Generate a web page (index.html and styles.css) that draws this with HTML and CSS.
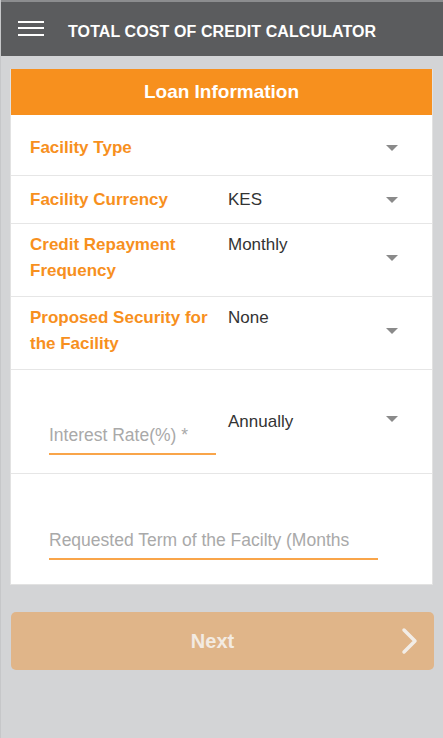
FILE: index.html
```html
<!DOCTYPE html>
<html lang="en">
<head>
    <meta charset="UTF-8">
    <meta name="viewport" content="width=device-width, initial-scale=1.0">
    <title>Total Cost of Credit Calculator</title>
    <link rel="stylesheet" href="styles.css">
</head>
<body>
    <header class="topbar">
        <div class="menu">
            <span></span><span></span><span></span>
        </div>
        <h1>TOTAL COST OF CREDIT CALCULATOR</h1>
    </header>

    <main class="page">
        <section class="card">
            <h2 class="card-title">Loan Information</h2>

            <div class="row row-first">
                <div class="label">Facility Type</div>
                <div class="value"></div>
                <div class="caret"></div>
            </div>
            <div class="row row-short">
                <div class="label">Facility Currency</div>
                <div class="value">KES</div>
                <div class="caret"></div>
            </div>
            <div class="row row-tall">
                <div class="label">Credit Repayment Frequency</div>
                <div class="value value-top">Monthly</div>
                <div class="caret"></div>
            </div>
            <div class="row row-tall">
                <div class="label">Proposed Security for the Facility</div>
                <div class="value value-top">None</div>
                <div class="caret"></div>
            </div>
            <div class="row row-rate">
                <input type="text" class="field field-rate" placeholder="Interest Rate(%) *">
                <div class="value">Annually</div>
                <div class="caret caret-rate"></div>
            </div>
            <div class="row row-term">
                <input type="text" class="field field-term" placeholder="Requested Term of the Facilty (Months">
            </div>
        </section>

        <button type="button" class="next">
            Next
            <svg class="chevron" width="18" height="28" viewBox="0 0 18 28">
                <path d="M3 3 L14 14 L3 25" fill="none" stroke="#f2ede7" stroke-width="3.5" stroke-linecap="round" stroke-linejoin="round"/>
            </svg>
        </button>
    </main>
</body>
</html>
```

FILE: styles.css
```css
body {
    margin: 0;
    font-family: "Liberation Sans", Arial, sans-serif;
    background: #d3d4d6;
    height: 738px;
    border-left: 1px solid #c6c7c9;
    box-sizing: border-box;
}
.topbar {
    height: 56px;
    background: #5b5c5e;
    border-top: 2px solid #8c8d8f;
    box-sizing: border-box;
    display: flex;
    align-items: center;
    padding-left: 17px;
}
.menu {
    width: 26px;
    display: flex;
    flex-direction: column;
    gap: 4.5px;
    margin-top: -2px;
}
.menu span {
    display: block;
    height: 2px;
    background: #fff;
}
.topbar h1 {
    margin: 6px 0 0 24px;
    font-size: 16px;
    font-weight: bold;
    color: #fff;
    letter-spacing: 0.1px;
}
.page {
    padding: 13px 10px 0 9px;
}
.card {
    background: #fff;
    border: 1px solid #e2e2e2;
    border-top: none;
}
.card-title {
    margin: 0;
    height: 46px;
    line-height: 46px;
    background: #f7901e;
    color: #fff;
    font-size: 19px;
    font-weight: bold;
    text-align: center;
}
.row {
    display: grid;
    grid-template-columns: 198px 1fr 24px;
    align-items: center;
    padding: 0 28px 0 19px;
    border-bottom: 1px solid #e6e6e6;
    box-sizing: border-box;
}
.row-first {
    height: 61px;
    padding-top: 5px;
}
.row-short {
    height: 48px;
}
.row-tall {
    height: 73px;
    padding-bottom: 4px;
}
.row-rate {
    height: 104px;
    align-items: start;
    padding-top: 39px;
}
.row-term {
    height: 110px;
    border-bottom: none;
    padding-top: 46px;
    align-items: start;
}
.label {
    color: #f7901e;
    font-weight: bold;
    font-size: 17px;
    line-height: 26px;
}
.value {
    color: #333;
    font-size: 17px;
    line-height: 26px;
}
.value-top {
    align-self: start;
    margin-top: 8px;
}
.caret {
    justify-self: center;
    width: 0;
    height: 0;
    border-left: 6px solid transparent;
    border-right: 6px solid transparent;
    border-top: 6px solid #8a8a8a;
}
.caret-rate {
    margin-top: 7px;
}
.field {
    font-family: "Liberation Sans", Arial, sans-serif;
    font-size: 17.5px;
    color: #333;
    height: 40px;
    padding: 2px 0 0;
    border: none;
    border-bottom: 2px solid #f9a54a;
    box-sizing: border-box;
    margin-left: 19px;
    outline: none;
    background: transparent;
}
.field::placeholder {
    color: #a9a9a9;
}
.field-rate {
    width: 167px;
    margin-top: 6px;
}
.field-term {
    grid-column: 1 / 3;
    width: 329px;
}
.next {
    position: relative;
    display: block;
    width: 100%;
    height: 58px;
    margin-top: 27px;
    margin-left: 1px;
    padding: 0 20px 0 0;
    border: none;
    border-radius: 5px;
    background: #e0b589;
    color: #f3ebe2;
    font-family: "Liberation Sans", Arial, sans-serif;
    font-size: 20px;
    font-weight: bold;
    cursor: pointer;
}
.chevron {
    position: absolute;
    right: 15px;
    top: 15px;
}
```
